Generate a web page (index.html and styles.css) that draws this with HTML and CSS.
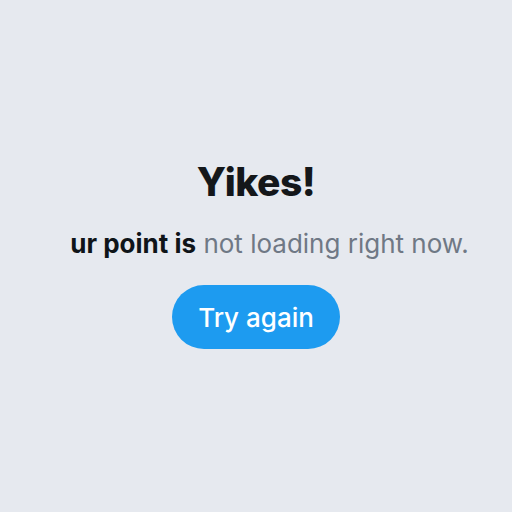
FILE: index.html
```html
<!DOCTYPE html>
<html lang="en">
<head>
    <meta charset="UTF-8">
    <meta name="viewport" content="width=device-width, initial-scale=1.0">
    <title>Yikes!</title>
    <link rel="stylesheet" href="styles.css">
</head>
<body>
<main class="error">
    <h1 class="error-title">Yikes!</h1>
    <p class="error-text"><strong>ur point is</strong> not loading right now.</p>
    <button class="retry" type="button">Try again</button>
</main>
</body>
</html>
```

FILE: styles.css
```css
html, body {
    height: 100%;
}

body {
    margin: 0;
    background: #e6e9ef;
    font-family: Inter, "Liberation Sans", sans-serif;
}

.error {
    display: flex;
    flex-direction: column;
    align-items: center;
    padding-top: 158px
}

.error-title {
    margin: 0;
    font-size: 39px;
    font-weight: 800;
    color: #14171a;
    letter-spacing: -0.5px
}

.error-text {
    margin: 23px 0 0 27px;
    font-size: 26px;
    color: #6f7885;
    white-space: nowrap
}

.error-text strong {
    color: #0f1419;
    font-weight: 700
}

.retry {
    margin-top: 26px;
    width: 168px;
    height: 64px;
    border: none;
    border-radius: 32px;
    background: #1d9bf0;
    color: #fff;
    font-family: inherit;
    font-size: 26px;
    font-weight: 500;
    cursor: pointer
}
```
